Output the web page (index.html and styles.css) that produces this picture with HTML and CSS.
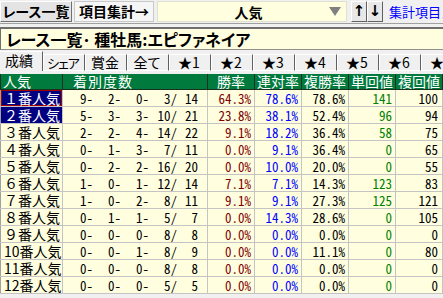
FILE: index.html
```html
<!DOCTYPE html>
<html lang="ja">

<head>
    <meta charset="UTF-8" />
    <meta name="viewport" content="width=device-width, initial-scale=1.0" />
    <title>レース一覧 種牡馬</title>
    <link rel="stylesheet" href="styles.css">
</head>

<body>
    <div class="toolbar">
        <button class="btn">レース一覧</button>
        <button class="btn on">項目集計→</button>
        <div class="combo">
            <span class="combo-text">人気</span>
            <span class="tri"></span>
        </div>
        <button class="arrow up">↑</button>
        <button class="arrow">↓</button>
        <a class="menu" href="#">集計項目メニュー</a>
    </div>

    <div class="title">レース一覧･ 種牡馬:エピファネイア</div>

    <div class="tabs">
        <span class="tab active">成績</span>
        <span class="tab narrow">シェア</span>
        <span class="tab">賞金</span>
        <span class="tab">全て</span>
        <span class="tab">★1</span>
        <span class="tab">★2</span>
        <span class="tab">★3</span>
        <span class="tab">★4</span>
        <span class="tab">★5</span>
        <span class="tab">★6</span>
        <span class="tab">★7</span>
    </div>

    <table class="grid">
        <colgroup>
            <col style="width: 62px">
            <col style="width: 145px">
            <col style="width: 47px">
            <col style="width: 47px">
            <col style="width: 47px">
            <col style="width: 47px">
            <col style="width: 47px">
            <col style="width: 47px">
        </colgroup>
        <thead>
            <tr>
                <th class="left">人気</th>
                <th class="left cnt-head">着別度数</th>
                <th>勝率</th>
                <th>連対率</th>
                <th>複勝率</th>
                <th>単回値</th>
                <th>複回値</th>
                <th></th>
            </tr>
        </thead>
        <tbody>
            <tr>
                <td class="pop sel focus">１番人気</td>
                <td class="cnt"><span>9-</span><span>2-</span><span>0-</span><span>3/</span><span>14</span></td>
                <td class="win">64.3%</td>
                <td class="ren">78.6%</td>
                <td class="fuku">78.6%</td>
                <td class="tan">141</td>
                <td class="fk">100</td>
                <td></td>
            </tr>
            <tr>
                <td class="pop sel">２番人気</td>
                <td class="cnt"><span>5-</span><span>3-</span><span>3-</span><span>10/</span><span>21</span></td>
                <td class="win">23.8%</td>
                <td class="ren">38.1%</td>
                <td class="fuku">52.4%</td>
                <td class="tan">96</td>
                <td class="fk">94</td>
                <td></td>
            </tr>
            <tr>
                <td class="pop">３番人気</td>
                <td class="cnt"><span>2-</span><span>2-</span><span>4-</span><span>14/</span><span>22</span></td>
                <td class="win">9.1%</td>
                <td class="ren">18.2%</td>
                <td class="fuku">36.4%</td>
                <td class="tan">58</td>
                <td class="fk">75</td>
                <td></td>
            </tr>
            <tr>
                <td class="pop">４番人気</td>
                <td class="cnt"><span>0-</span><span>1-</span><span>3-</span><span>7/</span><span>11</span></td>
                <td class="win">0.0%</td>
                <td class="ren">9.1%</td>
                <td class="fuku">36.4%</td>
                <td class="tan">0</td>
                <td class="fk">65</td>
                <td></td>
            </tr>
            <tr>
                <td class="pop">５番人気</td>
                <td class="cnt"><span>0-</span><span>2-</span><span>2-</span><span>16/</span><span>20</span></td>
                <td class="win">0.0%</td>
                <td class="ren">10.0%</td>
                <td class="fuku">20.0%</td>
                <td class="tan">0</td>
                <td class="fk">55</td>
                <td></td>
            </tr>
            <tr>
                <td class="pop">６番人気</td>
                <td class="cnt"><span>1-</span><span>0-</span><span>1-</span><span>12/</span><span>14</span></td>
                <td class="win">7.1%</td>
                <td class="ren">7.1%</td>
                <td class="fuku">14.3%</td>
                <td class="tan">123</td>
                <td class="fk">83</td>
                <td></td>
            </tr>
            <tr>
                <td class="pop">７番人気</td>
                <td class="cnt"><span>1-</span><span>0-</span><span>2-</span><span>8/</span><span>11</span></td>
                <td class="win">9.1%</td>
                <td class="ren">9.1%</td>
                <td class="fuku">27.3%</td>
                <td class="tan">125</td>
                <td class="fk">121</td>
                <td></td>
            </tr>
            <tr>
                <td class="pop">８番人気</td>
                <td class="cnt"><span>0-</span><span>1-</span><span>1-</span><span>5/</span><span>7</span></td>
                <td class="win">0.0%</td>
                <td class="ren">14.3%</td>
                <td class="fuku">28.6%</td>
                <td class="tan">0</td>
                <td class="fk">105</td>
                <td></td>
            </tr>
            <tr>
                <td class="pop">９番人気</td>
                <td class="cnt"><span>0-</span><span>0-</span><span>0-</span><span>8/</span><span>8</span></td>
                <td class="win">0.0%</td>
                <td class="ren">0.0%</td>
                <td class="fuku">0.0%</td>
                <td class="tan">0</td>
                <td class="fk">0</td>
                <td></td>
            </tr>
            <tr>
                <td class="pop">10番人気</td>
                <td class="cnt"><span>0-</span><span>0-</span><span>1-</span><span>8/</span><span>9</span></td>
                <td class="win">0.0%</td>
                <td class="ren">0.0%</td>
                <td class="fuku">11.1%</td>
                <td class="tan">0</td>
                <td class="fk">80</td>
                <td></td>
            </tr>
            <tr>
                <td class="pop">11番人気</td>
                <td class="cnt"><span>0-</span><span>0-</span><span>0-</span><span>8/</span><span>8</span></td>
                <td class="win">0.0%</td>
                <td class="ren">0.0%</td>
                <td class="fuku">0.0%</td>
                <td class="tan">0</td>
                <td class="fk">0</td>
                <td></td>
            </tr>
            <tr>
                <td class="pop">12番人気</td>
                <td class="cnt"><span>0-</span><span>0-</span><span>0-</span><span>5/</span><span>5</span></td>
                <td class="win">0.0%</td>
                <td class="ren">0.0%</td>
                <td class="fuku">0.0%</td>
                <td class="tan">0</td>
                <td class="fk">0</td>
                <td></td>
            </tr>
        </tbody>
    </table>
</body>

</html>
```

FILE: styles.css
```css
body {
    font-family: "Noto Sans CJK JP", sans-serif;
    margin: 0;
    padding: 0;
    background-color: #f0f0f0;
    color: #000;
    width: 443px;
    height: 298px;
    overflow: hidden;
}

/* top toolbar */
.toolbar {
    display: flex;
    align-items: center;
    height: 23px;
    padding: 0;
    border-bottom: 1px solid #a0a0a0;
    white-space: nowrap;
    overflow: hidden;
}

.toolbar > * {
    flex-shrink: 0;
}

.btn {
    font-family: inherit;
    font-size: 14px;
    font-weight: bold;
    font-feature-settings: "palt";
    width: 72px;
    height: 21px;
    margin: 0 1px 0 0;
    padding: 0;
    line-height: 19px;
    background-color: #e4e4e4;
    border: 1px solid;
    border-color: #fff #707070 #707070 #fff;
    color: #000;
}

.btn.on {
    width: 80px;
    margin-left: 1px;
    background-color: #f6f6f6;
    border-color: #c8c8c8;
}

.combo {
    display: flex;
    align-items: center;
    width: 190px;
    height: 21px;
    margin-left: 2px;
    background-color: #ffffe0;
    border: 1px solid #e0e0d0;
    box-sizing: border-box;
}

.combo-text {
    flex: 1;
    text-align: center;
    font-size: 14px;
    font-weight: bold;
    padding-left: 10px;
}

.tri {
    width: 0;
    height: 0;
    margin-right: 5px;
    border-left: 6px solid transparent;
    border-right: 6px solid transparent;
    border-top: 9px solid #808080;
}

.arrow {
    font-family: "DejaVu Sans", sans-serif;
    font-size: 15px;
    font-weight: bold;
    width: 16px;
    height: 21px;
    padding: 0;
    margin: 0;
    line-height: 17px;
    background-color: #e8e8e8;
    border: 1px solid;
    border-color: #fff #606060 #606060 #fff;
    color: #000;
}

.arrow.up {
    margin-left: 4px;
}

.menu {
    margin-left: 6px;
    font-size: 13px;
    color: #0000ff;
    text-decoration: none;
}

/* title box */
.title {
    margin: 3px 0 0 0;
    height: 20px;
    padding: 0 0 0 5px;
    background-color: #ffffe0;
    border-top: 2px solid #707070;
    border-left: 1px solid #707070;
    border-bottom: 1px solid #909090;
    font-size: 16px;
    font-weight: bold;
    font-feature-settings: "palt";
    line-height: 20px;
    white-space: nowrap;
    overflow: hidden;
}

/* tabs */
.tabs {
    display: flex;
    align-items: flex-end;
    height: 20px;
    margin-top: 1px;
    white-space: nowrap;
}

.tab {
    flex: 0 0 auto;
    box-sizing: border-box;
    width: 42px;
    height: 17px;
    padding: 0 2px 0 0;
    text-align: center;
    font-size: 14px;
    line-height: 15px;
    background-color: #f0f0f0;
    border-top: 1px solid #fff;
    border-left: 1px solid #fff;
    border-right: 1px solid #606060;
    border-bottom: 1px solid #fff;
    font-feature-settings: "palt";
}

.tab.narrow {
    font-size: 13px;
    letter-spacing: -1px;
}

.tab.active {
    width: 43px;
    height: 20px;
    padding: 0 0 0 5px;
    text-align: left;
    line-height: 17px;
    border-bottom: none;
    border-left: none;
}

/* grid */
.grid {
    margin-top: 3px;
    border-collapse: collapse;
    table-layout: fixed;
    width: 489px;
    background-color: #ffffe0;
    font-family: "Noto Sans Mono CJK JP", "Noto Sans CJK JP", monospace;
    font-size: 13px;
}

.grid th {
    height: 15px;
    padding: 0;
    background-color: #007a3d;
    color: #fff;
    font-weight: normal;
    font-size: 14px;
    line-height: 15px;
    border: 1px solid #1a3020;
    border-top: none;
    text-align: center;
    font-family: "Noto Sans CJK JP", sans-serif;
}

.grid th.left {
    text-align: left;
    padding-left: 2px;
}

.grid th.cnt-head {
    padding-left: 10px;
    letter-spacing: 1px;
}

.grid td {
    height: 16px;
    padding: 0 3px 0 0;
    line-height: 15px;
    border: 1px solid #c4c4c4;
    text-align: right;
    white-space: nowrap;
    overflow: hidden;
}

.grid td.pop {
    padding: 0 0 0 3px;
    text-align: left;
    font-family: "Noto Sans CJK JP", sans-serif;
    font-size: 14px;
    border-left: 1px solid #a0a0a0;
}

.grid td.sel {
    background-color: #000080;
    color: #fff;
}

.grid td.focus {
    box-shadow: inset 0 0 0 1px #a00000;
}

.grid td.cnt {
    padding: 0;
    text-align: left;
}

.cnt span {
    display: inline-block;
    width: 28px;
    text-align: right;
}

.cnt span:first-child {
    width: 30px;
}

.cnt span:last-child {
    width: 21px;
}

.win {
    color: #800000;
}

.ren {
    color: #0000ff;
}

.tan {
    color: #008000;
    padding-right: 4px;
}

.grid td.fk {
    padding-right: 4px;
}
```
